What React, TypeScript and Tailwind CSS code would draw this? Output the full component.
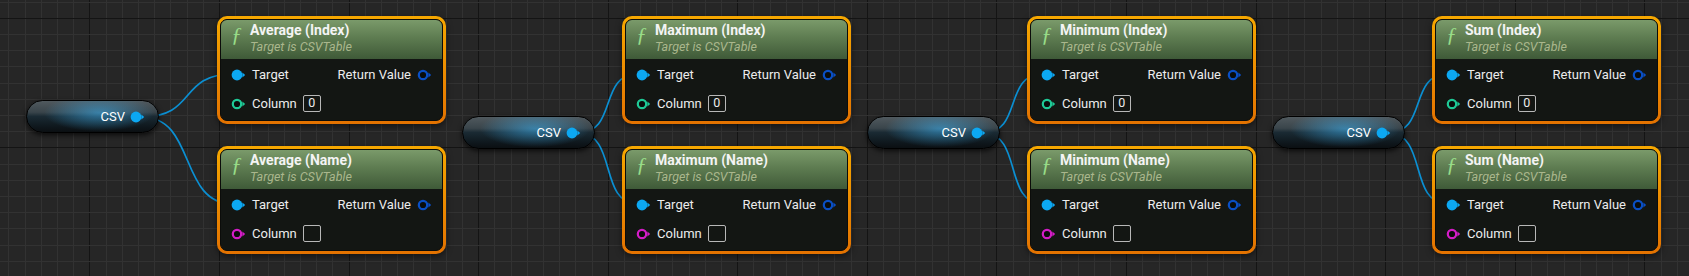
import React from "react";

type PinKind = "obj" | "ret" | "int" | "name";

const groups = [
  { name: "Average", pill: { x: 26, y: 100 }, nodeX: 217 },
  { name: "Maximum", pill: { x: 462, y: 116 }, nodeX: 622 },
  { name: "Minimum", pill: { x: 867, y: 116 }, nodeX: 1027 },
  { name: "Sum", pill: { x: 1272, y: 116 }, nodeX: 1432 },
];

const NODE_TOPS = [16, 146];
const PILL_W = 133;

const pinColors: Record<PinKind, string> = {
  obj: "#0ca8f2",
  ret: "#0a4fc4",
  int: "#1ec996",
  name: "#d21cc6",
};

function Pin({ kind }: { kind: PinKind }) {
  const c = pinColors[kind];
  return (
    <svg width="15" height="12" viewBox="0 0 15 12" className="shrink-0">
      {kind === "obj" ? (
        <circle cx="6" cy="6" r="5.4" fill={c} />
      ) : (
        <circle cx="6" cy="6" r="4.2" fill="#0a0c0a" stroke={c} strokeWidth="2.2" />
      )}
      <polygon points="11.4,3.6 14.2,6 11.4,8.4" fill={c} />
    </svg>
  );
}

function GridBg() {
  const xs = Array.from({ length: 112 }, (_, i) => i - 6);
  const ys = Array.from({ length: 20 }, (_, i) => i - 10);
  return (
    <svg className="absolute inset-0" width="1689" height="276">
      <rect width="1689" height="276" fill="#262626" />
      {xs.map((k) => {
        const x = Math.round(89.3 + k * 16.2) + 0.5;
        const major = ((k % 8) + 8) % 8 === 0;
        return (
          <line key={"x" + k} x1={x} x2={x} y1={0} y2={276} stroke={major ? "#141414" : "#323232"} strokeWidth="1" />
        );
      })}
      {ys.map((k) => {
        const y = Math.round(147.3 + k * 16.2) + 0.5;
        const major = ((k % 8) + 8) % 8 === 0;
        return (
          <line key={"y" + k} x1={0} x2={1689} y1={y} y2={y} stroke={major ? "#141414" : "#323232"} strokeWidth="1" />
        );
      })}
    </svg>
  );
}

function Wires() {
  return (
    <svg className="absolute inset-0" width="1689" height="276">
      {groups.map((g) =>
        NODE_TOPS.map((top) => {
          const x0 = g.pill.x + PILL_W - 17;
          const y0 = g.pill.y + 17;
          const x1 = g.nodeX + 16;
          const y1 = top + 58;
          const dx = Math.max(40, (x1 - x0) * 0.6);
          return (
            <path
              key={g.name + top}
              d={`M${x0},${y0} C${x0 + dx},${y0} ${x1 - dx},${y1} ${x1},${y1}`}
              fill="none"
              stroke="#0b8fd2"
              strokeWidth="1.7"
            />
          );
        })
      )}
    </svg>
  );
}

function CsvPill({ x, y }: { x: number; y: number }) {
  return (
    <div
      className="absolute w-[133px] h-[33px] rounded-full border border-black shadow-[0_2px_5px_rgba(0,0,0,0.7)] overflow-hidden bg-[linear-gradient(180deg,#50595e_0%,#3a454b_36%,#1a2a33_50%,#101a20_78%,#0b0f12_100%)]"
      style={{ left: x, top: y }}
    >
      <div className="absolute inset-0 bg-[radial-gradient(ellipse_42%_60%_at_55%_38%,rgba(60,170,230,0.6),transparent)]" />
      <div className="relative h-full flex items-center justify-end pr-[13px] text-[13px] text-white">
        <span className="mr-[5px]">CSV</span>
        <Pin kind="obj" />
      </div>
    </div>
  );
}

function FuncNode({ title, index, x, y }: { title: string; index: boolean; x: number; y: number }) {
  return (
    <div
      className="absolute w-[229px] h-[108px] rounded-[10px] p-[3px] bg-[linear-gradient(180deg,#f6a800,#e37200)] shadow-[0_2px_6px_rgba(0,0,0,0.5)]"
      style={{ left: x, top: y }}
    >
      <div className="h-full rounded-[7px] overflow-hidden border border-[#0b0c0a] bg-[#131613] flex flex-col">
        <div className="h-[39px] shrink-0 flex pl-[10px] bg-[linear-gradient(180deg,#7a9a6a_0%,#5e7c51_45%,#3f5a38_100%)]">
          <span className="w-[19px] mt-[4px] font-['Liberation_Serif'] italic text-[22px] leading-none text-[#98dc88]">ƒ</span>
          <div className="flex flex-col">
            <span className="mt-[2px] font-bold text-[14px] leading-[17px] text-[#f4f4f4]">{title}</span>
            <span className="italic text-[12.5px] leading-[15px] text-[#aab78d]">Target is CSVTable</span>
          </div>
        </div>
        <div className="flex-1 pt-[1px] text-[13px] text-[#ececec]">
          <div className="h-[29px] flex items-center pl-[10px] pr-[10px]">
            <Pin kind="obj" />
            <span className="ml-[6px]">Target</span>
            <span className="ml-auto mr-[6px]">Return Value</span>
            <Pin kind="ret" />
          </div>
          <div className="h-[29px] flex items-center pl-[10px]">
            <Pin kind={index ? "int" : "name"} />
            <span className="ml-[6px]">Column</span>
            <div className="ml-[6px] w-[18px] h-[17px] rounded-[2px] border border-[#b8b8b8] flex items-center justify-center text-[12.5px] leading-none">
              {index ? "0" : ""}
            </div>
          </div>
        </div>
      </div>
    </div>
  );
}

export default function App() {
  return (
    <div className="relative w-[1689px] h-[276px] overflow-hidden bg-[#262626] font-['Roboto',sans-serif]">
      <GridBg />
      <Wires />
      {groups.map((g) => (
        <React.Fragment key={g.name}>
          <CsvPill x={g.pill.x} y={g.pill.y} />
          <FuncNode title={`${g.name} (Index)`} index x={g.nodeX} y={NODE_TOPS[0]} />
          <FuncNode title={`${g.name} (Name)`} index={false} x={g.nodeX} y={NODE_TOPS[1]} />
        </React.Fragment>
      ))}
    </div>
  );
}
